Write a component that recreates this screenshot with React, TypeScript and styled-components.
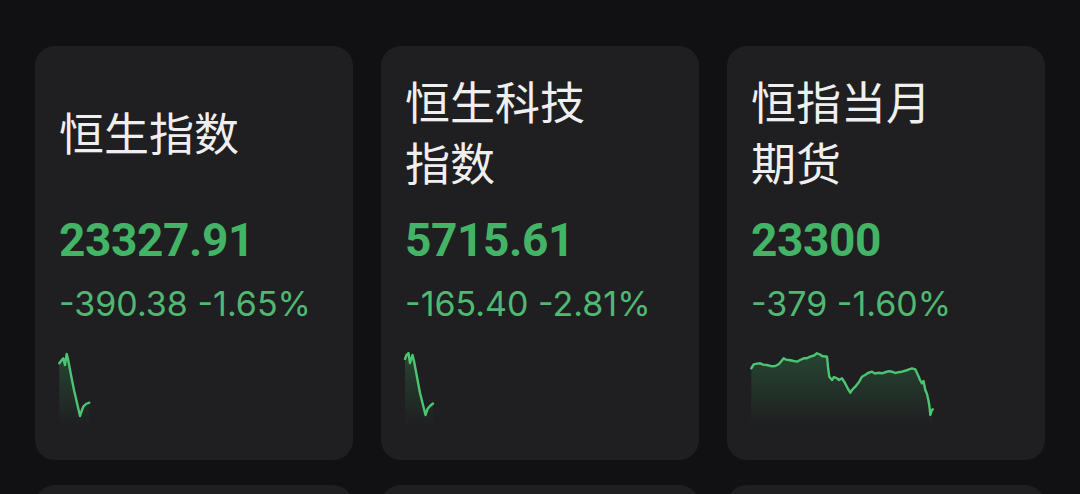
import styled, { createGlobalStyle } from "styled-components";

const GlobalStyle = createGlobalStyle`
  html, body {
    margin: 0;
    padding: 0;
    background: #111113;
    overflow: hidden;
  }
`;

const Page = styled.main`
  display: grid;
  grid-template-columns: repeat(3, 1fr);
  column-gap: 28px;
  row-gap: 25px;
  padding: 46px 35px 0;
  height: 494px;
  box-sizing: border-box;
  overflow: hidden;
`;

const Card = styled.section`
  background: #1f1f21;
  border-radius: 20px;
  padding: 24px 24px 35px;
  display: flex;
  flex-direction: column;
  box-sizing: border-box;
  height: 414px;
`;

const Title = styled.h2`
  margin: 0;
  height: 122px;
  display: flex;
  align-items: center;
  font-family: "Noto Sans CJK SC", "Noto Sans", sans-serif;
  font-weight: 400;
  font-size: 45px;
  line-height: 61px;
  color: #efefef;
`;

const Price = styled.div`
  margin-top: 25px;
  font-family: Roboto, "Liberation Sans", sans-serif;
  font-weight: 700;
  font-size: 46px;
  line-height: 46px;
  letter-spacing: -0.4px;
  color: #43b466;
`;

const Change = styled.div`
  margin-top: 24px;
  font-family: Inter, Roboto, "Liberation Sans", sans-serif;
  font-weight: 400;
  font-size: 34px;
  line-height: 33px;
  letter-spacing: 0;
  color: #50b872;
`;

const Chart = styled.svg`
  margin-top: 25px;
  display: block;
  width: 270px;
  height: 80px;
  overflow: visible;
`;

type Quote = {
  name: string[];
  price: string;
  change: string;
  points: [number, number][];
};

const steep: [number, number][] = [
  [0.3, 18.3], [2, 16], [4.3, 13.3], [6, 20], [7.7, 9], [9, 14],
  [12, 30], [15, 45], [18, 58], [21, 71], [23, 65], [24.3, 61.7], [27, 59], [30.3, 57.7],
];

const steep2: [number, number][] = [
  [0, 14], [1.5, 10], [3.5, 8], [5, 18], [7.5, 10], [9, 16],
  [12, 32], [15, 48], [18, 60], [20.5, 70], [22.5, 64], [25, 61], [28, 58.5],
];

const futures: [number, number][] = [
  [0.3, 23.3], [2.7, 19.3], [6, 18.6], [9.3, 18.3], [12, 19.6], [16, 20], [20, 21.2],
  [24.3, 21], [28, 19], [32.7, 13.3], [35, 14.6], [37.7, 15], [42, 15.8], [46, 16.7],
  [49, 15], [52.7, 13.3], [56, 13.2], [59.3, 11.7], [63, 10.5], [66, 8.3], [69, 9.5],
  [71, 11], [76, 11.7], [77, 22], [78.3, 31.7], [81, 35], [83, 32], [86, 33.3],
  [88, 35], [91, 33.3], [94, 38], [97, 44], [99.3, 47.7], [101, 45], [104.3, 41.7],
  [108, 37], [111, 31.7], [114, 30], [117, 28], [121, 26.7], [124, 28.5], [127, 27.8],
  [131, 28.3], [135, 27], [138, 26.2], [141, 26.7], [144, 28], [147, 27.3], [151, 26.7],
  [155, 25.5], [158, 24.4], [161, 23.3], [164.3, 24.3], [166, 28], [167.7, 31.7],
  [169, 35], [171, 38.3], [172.5, 36], [174.3, 45], [176, 49], [177.7, 56.7],
  [178.5, 62], [179.3, 70], [180.5, 66], [181.7, 64.3],
];

const quotes: Quote[] = [
  { name: ["恒生指数"], price: "23327.91", change: "-390.38 -1.65%", points: steep },
  { name: ["恒生科技", "指数"], price: "5715.61", change: "-165.40 -2.81%", points: steep2 },
  { name: ["恒指当月", "期货"], price: "23300", change: "-379 -1.60%", points: futures },
];

function Sparkline({ points, id }: { points: [number, number][]; id: string }) {
  const line = points.map(([x, y], i) => `${i ? "L" : "M"}${x} ${y}`).join(" ");
  const last = points[points.length - 1];
  const area = `${line} L${last[0]} 80 L${points[0][0]} 80 Z`;
  return (
    <Chart viewBox="0 0 270 80" aria-hidden>
      <defs>
        <linearGradient id={id} x1="0" y1="0" x2="0" y2="1">
          <stop offset="0%" stopColor="#3fbf68" stopOpacity="0.24" />
          <stop offset="100%" stopColor="#3fbf68" stopOpacity="0" />
        </linearGradient>
      </defs>
      <path d={area} fill={`url(#${id})`} />
      <path
        d={line}
        fill="none"
        stroke="#4cc572"
        strokeWidth="2.4"
        strokeLinejoin="round"
        strokeLinecap="round"
      />
    </Chart>
  );
}

export default function App() {
  return (
    <>
      <GlobalStyle />
      <Page>
        {quotes.map((q, i) => (
          <Card key={i}>
            <Title>
              <span>
                {q.name.map((line, j) => (
                  <div key={j}>{line}</div>
                ))}
              </span>
            </Title>
            <Price>{q.price}</Price>
            <Change>{q.change}</Change>
            <Sparkline points={q.points} id={`fill-${i}`} />
          </Card>
        ))}
        {/* next row of cards, scrolled below the fold */}
        <Card />
        <Card />
        <Card />
      </Page>
    </>
  );
}
